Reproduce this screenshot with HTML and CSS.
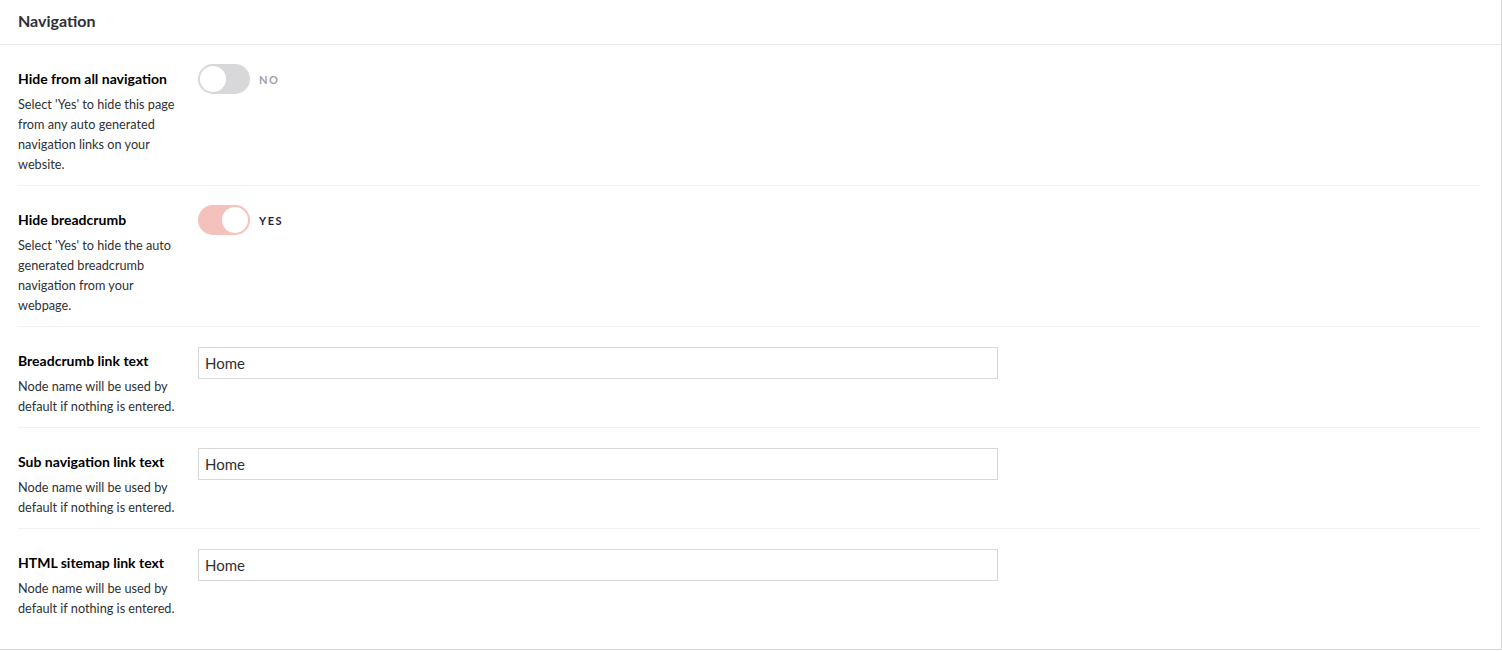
FILE: index.html
```html
<!DOCTYPE html>
<html>
<head>
<meta charset="utf-8">
<link rel="stylesheet" href="styles.css">
</head>
<body>
<div class="box">
  <div class="box-header">Navigation</div>
  <div class="box-content">
    <div class="prop">
      <div class="prop-label">
        <div class="label">Hide from all navigation</div>
        <div class="desc">Select 'Yes' to hide this page from any auto generated navigation links on your website.</div>
      </div>
      <div class="prop-control">
        <div class="toggle-wrap">
          <span class="toggle"><span class="knob"></span></span>
          <span class="toggle-label off">NO</span>
        </div>
      </div>
    </div>
    <div class="prop">
      <div class="prop-label">
        <div class="label">Hide breadcrumb</div>
        <div class="desc">Select 'Yes' to hide the auto generated breadcrumb navigation from your webpage.</div>
      </div>
      <div class="prop-control">
        <div class="toggle-wrap">
          <span class="toggle on"><span class="knob"></span></span>
          <span class="toggle-label">YES</span>
        </div>
      </div>
    </div>
    <div class="prop">
      <div class="prop-label">
        <div class="label">Breadcrumb link text</div>
        <div class="desc">Node name will be used by default if nothing is entered.</div>
      </div>
      <div class="prop-control">
        <input class="text-input" type="text" value="Home">
      </div>
    </div>
    <div class="prop">
      <div class="prop-label">
        <div class="label">Sub navigation link text</div>
        <div class="desc">Node name will be used by default if nothing is entered.</div>
      </div>
      <div class="prop-control">
        <input class="text-input" type="text" value="Home">
      </div>
    </div>
    <div class="prop last">
      <div class="prop-label">
        <div class="label">HTML sitemap link text</div>
        <div class="desc">Node name will be used by default if nothing is entered.</div>
      </div>
      <div class="prop-control">
        <input class="text-input" type="text" value="Home">
      </div>
    </div>
  </div>
</div>
</body>
</html>
```
FILE: styles.css
```css
html, body {
  margin: 0;
  padding: 0;
  background: #ffffff;
}
body {
  font-family: Lato, "Open Sans", "Liberation Sans", sans-serif;
  color: #303033;
}
.box {
  width: 1501px;
  height: 649px;
  background: #fff;
  border-right: 1px solid #d8d7d9;
  border-bottom: 1px solid #d8d7d9;
}
.box-header {
  height: 45px;
  box-sizing: border-box;
  padding: 9px 18px 11px;
  font-size: 16px;
  line-height: 24px;
  font-weight: 700;
  color: #303033;
  border-bottom: 1px solid #e9e9eb;
}
.box-content {
  padding: 0 21px 0 18px;
}
.prop {
  display: flex;
  gap: 20px;
  padding: 20px 0 11px;
  border-bottom: 1px solid #f3f3f5;
}
.prop.last {
  border-bottom: none;
}
.prop-label {
  width: 160px;
  flex: none;
  padding-top: 4px;
}
.label {
  font-size: 14px;
  line-height: 20px;
  font-weight: 700;
  color: #000;
}
.desc {
  margin-top: 5px;
  font-size: 12.7px;
  line-height: 20px;
  color: #303033;
}
.prop-control {
  flex: 1;
}
.toggle-wrap {
  display: flex;
  align-items: center;
  margin-top: -1px;
}
.toggle {
  position: relative;
  width: 52px;
  height: 30px;
  border-radius: 15px;
  background: #d8d7d9;
  display: block;
}
.toggle.on {
  background: #f5c1bc;
}
.knob {
  position: absolute;
  top: 2px;
  left: 2px;
  width: 26px;
  height: 26px;
  border-radius: 50%;
  background: #fff;
}
.toggle.on .knob {
  left: 24px;
}
.toggle-label {
  margin-left: 9px;
  font-size: 11px;
  font-weight: 700;
  letter-spacing: 1.5px;
  color: #1b264f;
}
.toggle-label.off {
  color: #a2a1a6;
}
.text-input {
  display: block;
  width: 800px;
  height: 32px;
  box-sizing: border-box;
  border: 1px solid #d8d7d9;
  padding: 0 6px;
  margin: 0;
  font-family: Lato, "Open Sans", "Liberation Sans", sans-serif;
  font-size: 15px;
  color: #303033;
  background: #fff;
  outline: none;
}
```
